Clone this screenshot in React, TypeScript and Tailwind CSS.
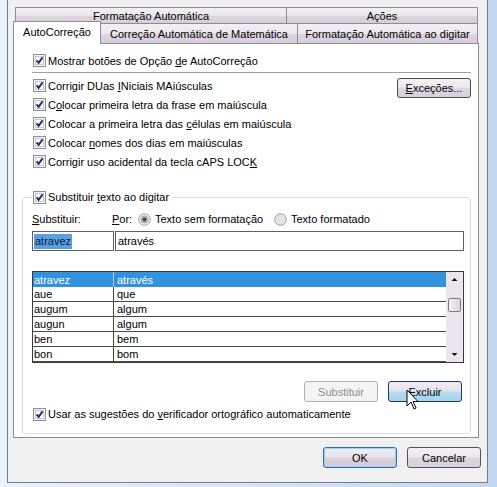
import React from 'react';

const CheckBox = () => (
  <svg width="13" height="13" viewBox="0 0 13 13" className="shrink-0">
    <rect x="0.5" y="0.5" width="12" height="12" fill="#f4f4f4" stroke="#8e8f8f" />
    <rect x="2.5" y="2.5" width="8" height="8" fill="#ffffff" stroke="#c6c9cc" />
    <path d="M3.6 6.4 L5.6 8.9 L9.6 3.4" fill="none" stroke="#1c2f6b" strokeWidth="1.9" />
  </svg>
);

const Radio = ({ on }: { on?: boolean }) => (
  <svg width="13" height="13" viewBox="0 0 13 13" className="shrink-0">
    <circle cx="6.5" cy="6.5" r="5.8" fill={on ? '#f4f4f4' : '#e4e4e4'} stroke="#9a9a9a" />
    {on && <circle cx="6.5" cy="6.5" r="3.6" fill="#d9d9d9" stroke="#8a8a8a" strokeWidth="0.8" />}
    {on && <circle cx="6.5" cy="6.5" r="2.2" fill="#4a4a4a" />}
  </svg>
);

const CheckRow = ({ children }: { children: React.ReactNode }) => (
  <div className="flex h-[19px] items-center gap-[2px]">
    <CheckBox />
    <span className="pt-px whitespace-nowrap">{children}</span>
  </div>
);

const rows = [
  ['aue', 'que'],
  ['augum', 'algum'],
  ['augun', 'algum'],
  ['ben', 'bem'],
  ['bon', 'bom'],
];

export default function App() {
  return (
    <div className="flex h-[487px] w-[497px] bg-[linear-gradient(90deg,#eaf2fb,#c3d7ee)] font-['Liberation_Sans',Arial,sans-serif] text-[11px] leading-none text-black">
      <div className="ml-[7px] flex h-[483px] w-[481px] flex-col border-r border-b border-l border-[#6e7f93] bg-[#f0f0f0]">
        {/* tab row 1 */}
        <div className="mt-[7px] ml-[7px] flex h-[16px]">
          <div className="flex w-[271px] items-center justify-center border-t border-l border-[#8d8d8d] bg-[linear-gradient(#f2f0f4_0%,#ece8ee_50%,#ddd6df_51%,#d6ced8_100%)] pt-px">
            Formatação Automática
          </div>
          <div className="flex w-[192px] items-center justify-center border-t border-r border-l border-[#8d8d8d] bg-[linear-gradient(#f2f0f4_0%,#ece8ee_50%,#ddd6df_51%,#d6ced8_100%)] pt-px">
            Ações
          </div>
        </div>
        {/* tab row 2 */}
        <div className="ml-[5px] flex h-[20px] items-end">
          <div className="relative z-10 -mb-px flex h-[23px] w-[88px] items-center justify-center border-t border-r border-l border-[#898c95] bg-white pb-px">
            AutoCorreção
          </div>
          <div className="flex h-[20px] w-[197px] items-center justify-center border-t border-r border-[#8d8d8d] bg-[linear-gradient(#f2f0f4_0%,#ece8ee_50%,#ddd6df_51%,#d6ced8_100%)] pt-px">
            Correção Automática de Matemática
          </div>
          <div className="flex h-[20px] w-[180px] items-center justify-center border-t border-r border-[#8d8d8d] bg-[linear-gradient(#f2f0f4_0%,#ece8ee_50%,#ddd6df_51%,#d6ced8_100%)] pt-px">
            Formatação Automática ao digitar
          </div>
        </div>

        {/* panel */}
        <div className="ml-[5px] flex h-[395px] w-[466px] flex-col border border-[#898c95] bg-white">
          <div className="pt-[7px] pr-[7px] pl-[19px]">
            <CheckRow>
              Mostrar botões de Opção <u>d</u>e AutoCorreção
            </CheckRow>
            <div className="mt-[2px] -ml-px h-px bg-[#a0a0a0]" />
            <div className="mt-[3px] flex justify-between">
              <div>
                <CheckRow>
                  Corrigir DUas <u>I</u>Niciais MAiúsculas
                </CheckRow>
                <CheckRow>
                  C<u>o</u>locar primeira letra da frase em maiúscula
                </CheckRow>
                <CheckRow>
                  Colocar a primeira letra das <u>c</u>élulas em maiúscula
                </CheckRow>
                <CheckRow>
                  Colocar <u>n</u>omes dos dias em maiúsculas
                </CheckRow>
                <CheckRow>
                  Corrigir uso acidental da tecla cAPS LOC<u>K</u>
                </CheckRow>
              </div>
              <div className="mt-[2px] flex h-[20px] w-[74px] items-center justify-center rounded-[3px] border border-[#4a4a4a] bg-[linear-gradient(#f4f2f5_0%,#ece8ee_45%,#ddd6df_55%,#d8d0da_100%)] pt-px">
                <u>E</u>xceções...
              </div>
            </div>
          </div>

          {/* group */}
          <fieldset className="mt-[18px] ml-[8px] w-[449px] rounded-[3px] border border-[#d5dfe5] pr-[6px] pb-[11px] pl-[9px]">
            <legend className="flex h-[16px] items-center gap-[2px] pr-[3px] pl-[1px]">
              <CheckBox />
              <span className="pt-px">
                Substituir <u>t</u>exto ao digitar
              </span>
            </legend>
            <div className="mt-[6px] flex h-[16px] items-center">
              <span className="w-[80px] pt-px">
                <u>S</u>ubstituir:
              </span>
              <span className="w-[26px] pt-px">
                <u>P</u>or:
              </span>
              <Radio on />
              <span className="ml-[4px] w-[119px] pt-px">Texto sem formatação</span>
              <Radio />
              <span className="ml-[4px] pt-px">Texto formatado</span>
            </div>
            <div className="mt-[4px] flex h-[20px] gap-[1px]">
              <div className="flex w-[82px] items-center border border-[#5a6068] pl-px">
                <span className="bg-[#5c9fe0] px-px py-[2px] text-[#0b1c3c]">atravez</span>
              </div>
              <div className="flex flex-1 items-center border border-[#5a6068] pt-px pl-[2px]">através</div>
            </div>

            {/* list */}
            <div className="mt-[20px] flex h-[92px] border border-[#3a3a3a]">
              <div className="flex-1">
                <div className="flex h-[15px] bg-[#3392dc] text-white">
                  <div className="flex w-[81px] items-center border-r border-[#b8cbe0] pt-px pl-px">atravez</div>
                  <div className="flex items-center pt-px pl-[3px]">através</div>
                </div>
                {rows.map(([a, b]) => (
                  <div key={a} className="flex h-[15px] border-b border-[#4a4a4a]">
                    <div className="flex w-[81px] items-center border-r border-[#4a4a4a] pt-px pl-px">{a}</div>
                    <div className="flex items-center pt-px pl-[3px]">{b}</div>
                  </div>
                ))}
              </div>
              <div className="flex w-[17px] flex-col items-center bg-[#ebe6ee]">
                <svg width="17" height="15" viewBox="0 0 17 15">
                  <path d="M5.5 9 L8.5 6 L11.5 9 Z" fill="#111" />
                </svg>
                <div className="mt-[11px] h-[14px] w-[13px] rounded-[2px] border border-[#7c7c7c] bg-[linear-gradient(90deg,#f4f4f4,#d8d8d8)]" />
                <div className="flex-1" />
                <svg width="17" height="15" viewBox="0 0 17 15">
                  <path d="M5.5 6 L8.5 9 L11.5 6 Z" fill="#111" />
                </svg>
              </div>
            </div>

            <div className="mt-[18px] mr-[2px] flex h-[21px] justify-end gap-[10px]">
              <div className="flex w-[74px] items-center justify-center rounded-[3px] border border-[#adb2b5] bg-[#f4f4f4] pt-px text-[#8d8d8d]">
                Substituir
              </div>
              <div className="relative flex w-[74px] items-center justify-center rounded-[3px] border border-[#1f3a5c] bg-[linear-gradient(#f0ecf2_0%,#e6e2ea_45%,#b6daf2_55%,#a8d2ee_100%)] pt-px">
                Excluir
                <svg width="13" height="21" viewBox="0 0 13 21" className="absolute top-[7px] left-[17px]">
                  <path d="M1 1 L1 17 L5 13 L8 20 L10 19 L7 12.5 L12 12.5 Z" fill="#fff" stroke="#000" strokeWidth="1" strokeLinejoin="round" />
                </svg>
              </div>
            </div>
            <div className="mt-[4px] flex h-[16px] items-center gap-[2px] pl-px">
              <CheckBox />
              <span className="pt-px">
                Usar as sugestões do <u>v</u>erificador ortográfico automaticamente
              </span>
            </div>
          </fieldset>
        </div>

        {/* dialog buttons */}
        <div className="mt-[9px] mr-[6px] flex h-[21px] justify-end gap-[10px]">
          <div className="flex w-[74px] items-center justify-center rounded-[3px] border border-[#2c6fa6] bg-[linear-gradient(#f0eef3_0%,#e8e4ec_45%,#d9d2de_55%,#d2cad6_100%)] pt-px shadow-[inset_0_0_0_1px_#9fd0f2]">
            OK
          </div>
          <div className="flex w-[74px] items-center justify-center rounded-[3px] border border-[#555] bg-[linear-gradient(#f4f2f5_0%,#ece8ee_45%,#ddd6df_55%,#d8d0da_100%)] pt-px">
            Cancelar
          </div>
        </div>
      </div>
    </div>
  );
}
